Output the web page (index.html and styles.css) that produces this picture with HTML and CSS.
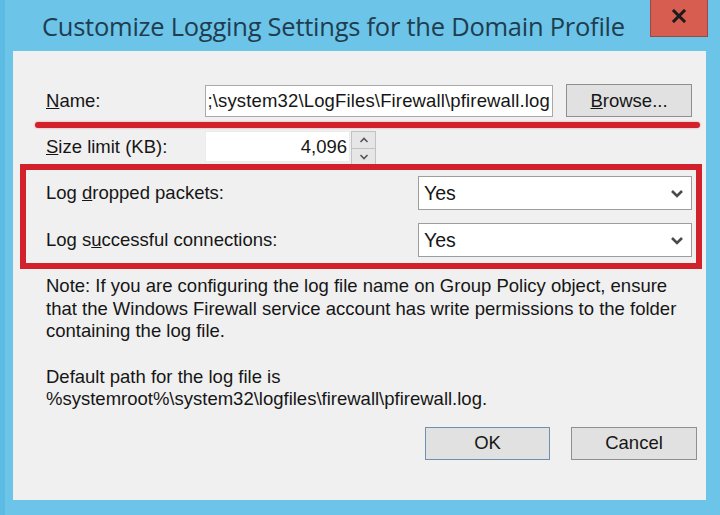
FILE: index.html
```html
<!DOCTYPE html>
<html lang="en">
<head>
<meta charset="utf-8">
<title>Customize Logging Settings for the Domain Profile</title>
<link rel="stylesheet" href="styles.css">
</head>
<body>
<div class="window">
  <div class="titlebar">
    <div class="title">Customize Logging Settings for the Domain Profile</div>
    <button class="close" aria-label="Close">
      <svg width="16" height="14" viewBox="0 0 16 14"><path d="M3 2 L13 12 M13 2 L3 12" stroke="#1b1b1b" stroke-width="3" stroke-linecap="square"/></svg>
    </button>
  </div>
  <div class="client">
    <div class="row row-name">
      <label class="label label-short"><u>N</u>ame:</label>
      <div class="textbox textbox-path">;\system32\LogFiles\Firewall\pfirewall.log</div>
      <button class="btn btn-browse"><u>B</u>rowse...</button>
    </div>
    <div class="row row-size">
      <label class="label label-short"><u>S</u>ize limit (KB):</label>
      <div class="textbox textbox-num">4,096</div>
      <div class="spinner">
        <span class="spin spin-up"><svg width="10" height="6" viewBox="0 0 10 6"><path d="M1.5 5 L5 1.5 L8.5 5" fill="none" stroke="#555" stroke-width="1.6"/></svg></span>
        <span class="spin spin-down"><svg width="10" height="6" viewBox="0 0 10 6"><path d="M1.5 1 L5 4.5 L8.5 1" fill="none" stroke="#555" stroke-width="1.6"/></svg></span>
      </div>
    </div>
    <div class="row row-select first">
      <label class="label label-long">Log <u>d</u>ropped packets:</label>
      <div class="select"><span>Yes</span>
        <svg class="chev" width="14" height="9" viewBox="0 0 14 9"><path d="M2 2 L7 7 L12 2" fill="none" stroke="#4a4a4a" stroke-width="2.6"/></svg>
      </div>
    </div>
    <div class="row row-select second">
      <label class="label label-long">Log s<u>u</u>ccessful connections:</label>
      <div class="select"><span>Yes</span>
        <svg class="chev" width="14" height="9" viewBox="0 0 14 9"><path d="M2 2 L7 7 L12 2" fill="none" stroke="#4a4a4a" stroke-width="2.6"/></svg>
      </div>
    </div>
    <p class="note">Note: If you are configuring the log file name on Group Policy object, ensure that the Windows Firewall service account has write permissions to the folder containing the log file.</p>
    <p class="note path">Default path for the log file is<br>%systemroot%\system32\logfiles\firewall\pfirewall.log.</p>
    <div class="actions">
      <button class="btn btn-ok">OK</button>
      <button class="btn btn-cancel">Cancel</button>
    </div>

    <!-- red highlight marks drawn over the form -->
    <div class="mark-line"></div>
    <div class="mark-box"></div>
  </div>
</div>
</body>
</html>
```
FILE: styles.css
```css
html, body {
  margin: 0;
  padding: 0;
}

body {
  width: 720px;
  height: 515px;
  overflow: hidden;
  background: #68c1e5;
  font-family: "Liberation Sans", Arial, sans-serif;
  color: #161616;
}

.window {
  width: 720px;
  height: 515px;
  display: flex;
  flex-direction: column;
  background: linear-gradient(90deg, #5cbbe2 0, #5cbbe2 5px, #6cc4e8 5px, #6cc4e8 100%);
}

.titlebar {
  height: 51px;
  display: flex;
  align-items: flex-start;
  position: relative;
}

.title {
  padding: 9px 0 0 42px;
  font-family: "Open Sans", "Noto Sans", sans-serif;
  font-size: 25.5px;
  letter-spacing: -0.25px;
  color: #1f3d4f;
  white-space: nowrap;
}

.close {
  margin-left: auto;
  margin-right: 12px;
  width: 58px;
  height: 37px;
  padding: 0 0 4px;
  border: 1px solid #9a4a46;
  border-top: none;
  background: #d65d4f;
  display: flex;
  align-items: center;
  justify-content: center;
}

.client {
  position: relative;
  margin: 0 14px 15px 13px;
  flex: 1;
  background: #f0f0f0;
  padding: 33px 14px 0 33px;
  font-size: 18.5px;
}

.row {
  display: flex;
  align-items: center;
}

.label {
  white-space: nowrap;
}

.label-short { width: 159px; }
.label-long { width: 372px; }

.textbox {
  height: 30px;
  box-sizing: border-box;
  background: #fff;
  border: 1px solid #a9a9a9;
  display: flex;
  align-items: center;
  white-space: nowrap;
  overflow: hidden;
}

.row-name { height: 33px; }

.textbox-path {
  width: 348px;
  height: 32px;
  padding: 0 2px 0 1px;
  justify-content: flex-end;
  letter-spacing: 0.15px;
}

.btn {
  font-family: "Liberation Sans", Arial, sans-serif;
  font-size: 18.5px;
  color: #161616;
  background: #e1e1e1;
  border: 1px solid #8f8f8f;
  box-sizing: border-box;
  height: 33px;
  padding: 0;
}

.btn-browse {
  width: 126px;
  margin-left: 13px;
}

.row-size {
  margin-top: 14px;
  height: 31px;
}

.textbox-num {
  width: 145px;
  height: 31px;
  justify-content: flex-end;
  padding-right: 2px;
  border-color: #ececec;
}

.spinner {
  width: 25px;
  height: 35px;
  align-self: flex-start;
  display: flex;
  flex-direction: column;
  margin-left: 1px;
}

.spin {
  flex: 1;
  background: #e6e6e6;
  border: 1px solid #c2c2c2;
  display: flex;
  align-items: center;
  justify-content: center;
}

.spin-down { border-top: none; }

.row-select { height: 34px; }
.row-select.first { margin-top: 14px; }
.row-select.second { margin-top: 13px; }

.select {
  width: 274px;
  height: 34px;
  box-sizing: border-box;
  background: #fff;
  border: 1px solid #9d9d9d;
  display: flex;
  align-items: center;
  padding: 0 7px 0 5px;
  font-size: 19.5px;
}

.select span { flex: 1; }

.note {
  margin: 18px 0 0;
  line-height: 22.5px;
  width: 635px;
}

.note.path { margin-top: 23px; }

.actions {
  display: flex;
  justify-content: flex-end;
  gap: 21px;
  margin-top: 16px;
  margin-right: -5px;
}

.btn-ok {
  width: 125px;
  height: 33px;
  border-color: #6f8fb0;
}

.btn-cancel {
  width: 126px;
  height: 33px;
}

.mark-line {
  position: absolute;
  left: 22px;
  top: 71px;
  width: 665px;
  height: 6px;
  background: #d3212c;
  border-radius: 3px;
  box-shadow: 0 0 2px rgba(211, 33, 44, 0.5);
}

.mark-box {
  position: absolute;
  left: 7px;
  top: 113px;
  width: 670px;
  height: 93px;
  border: 6px solid #d3212c;
}
```
